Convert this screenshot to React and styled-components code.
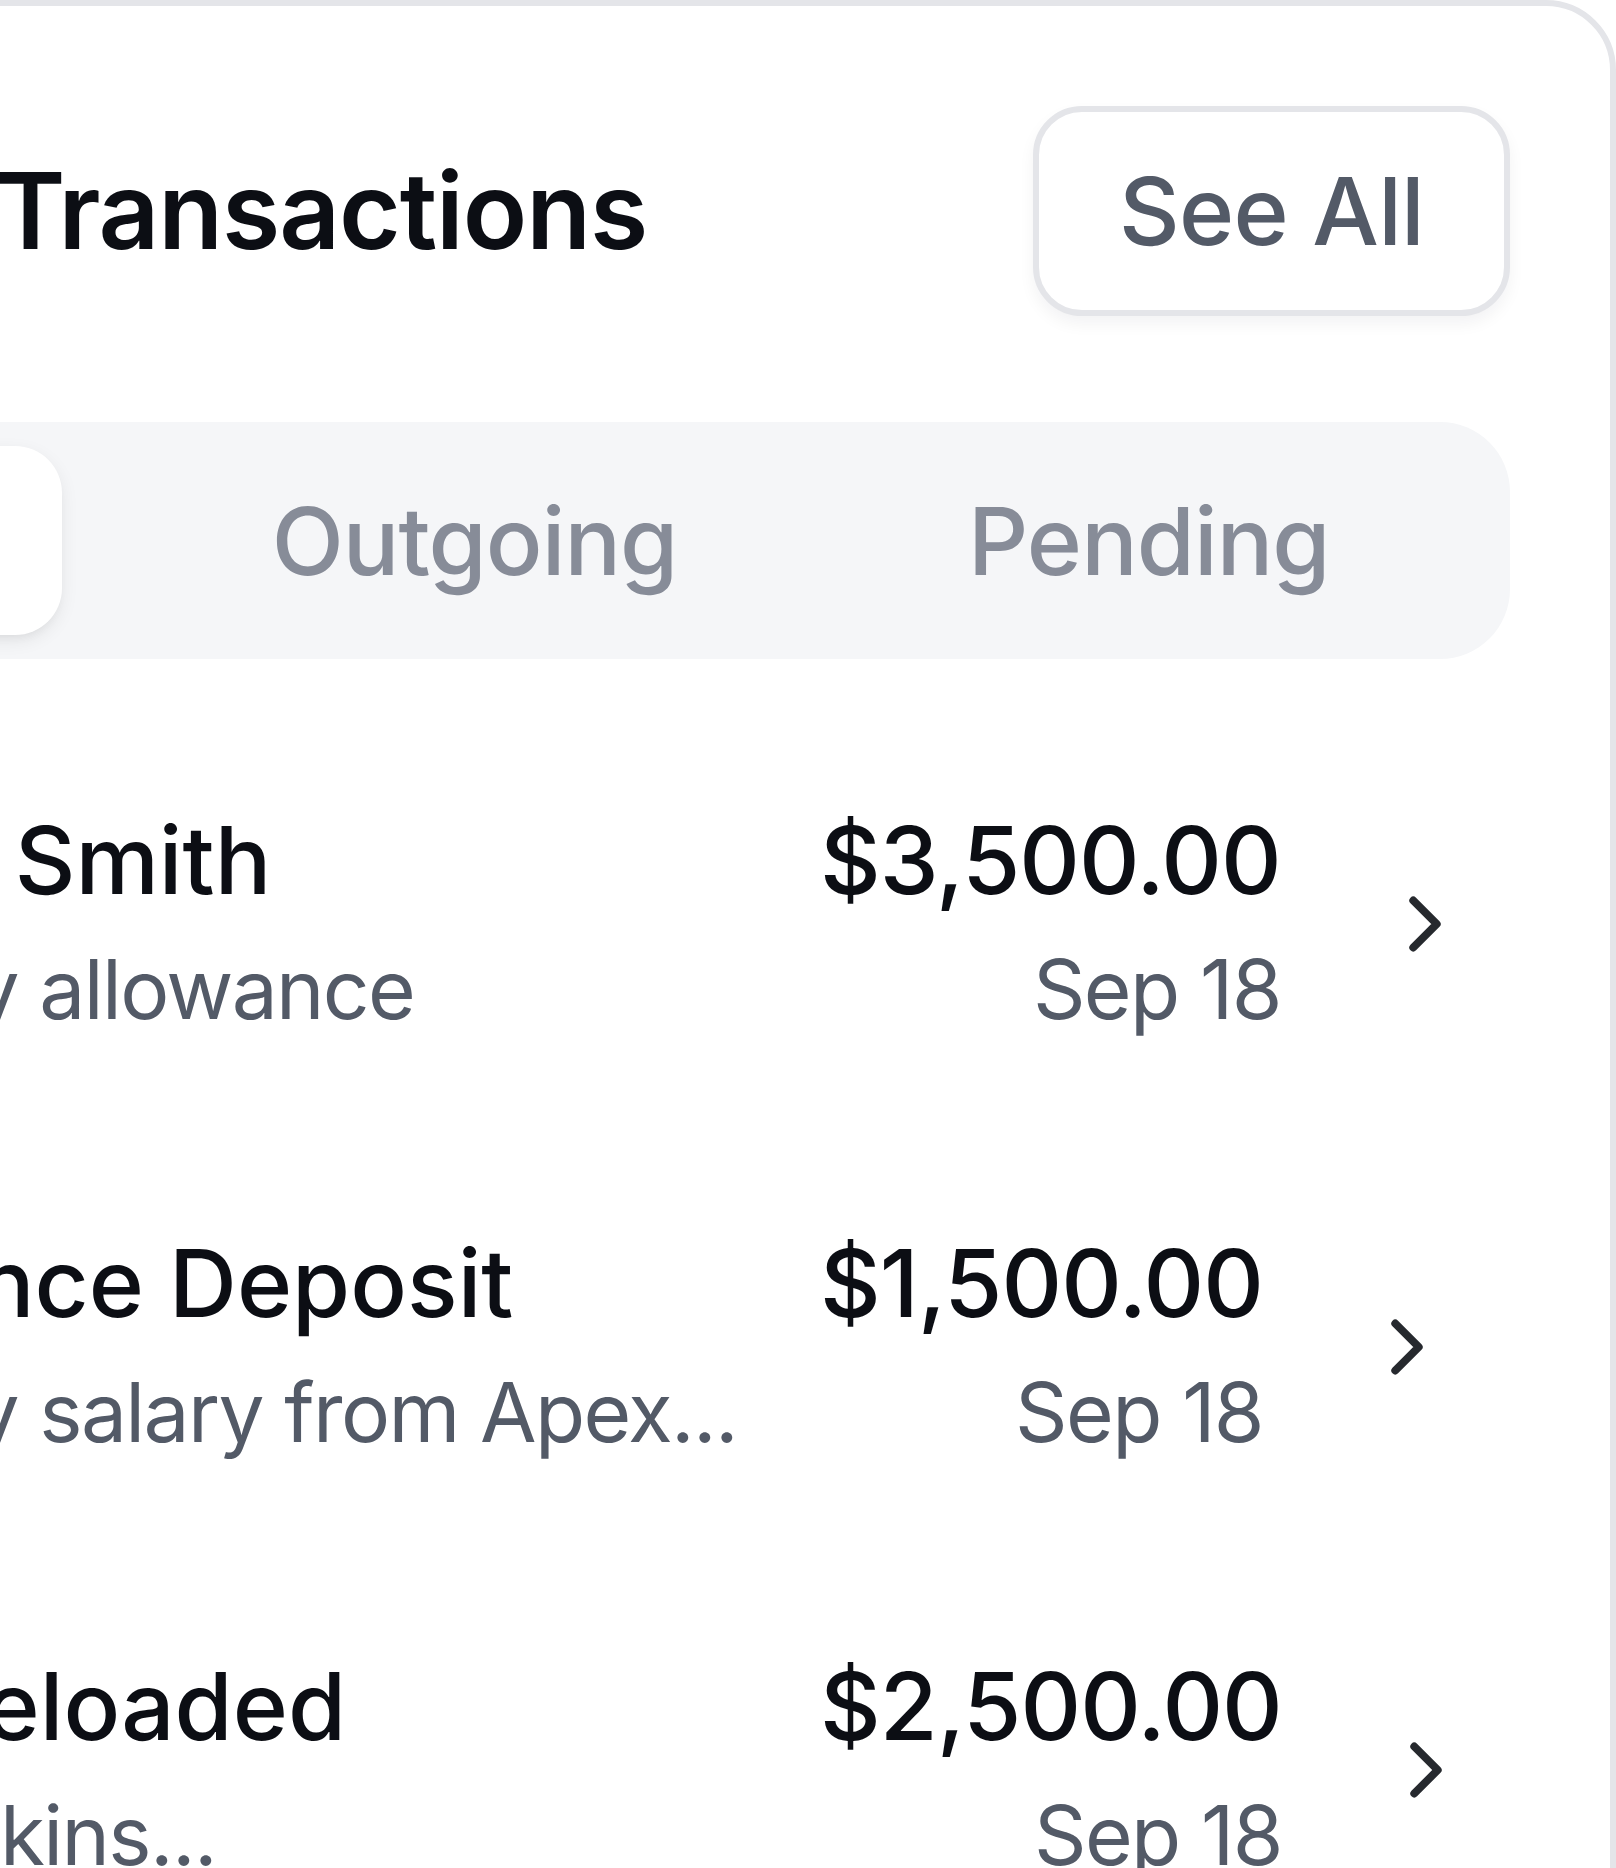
import React from "react";
import styled, { createGlobalStyle } from "styled-components";
import { ChevronRight, Receipt, ArrowDownLeft, Wallet } from "lucide-react";

const GlobalStyle = createGlobalStyle`
  html, body {
    margin: 0;
    padding: 0;
    background: #ffffff;
  }
  body {
    font-family: Inter, "Noto Sans", sans-serif;
    overflow: hidden;
  }
`;

const Page = styled.div`
  width: 1616px;
  height: 1868px;
  overflow: hidden;
`;

const Card = styled.section`
  box-sizing: border-box;
  width: 2283px;
  margin-left: -667px;
  padding: 100px 100px 120px;
  background: #ffffff;
  border: 6px solid #e4e5e9;
  border-radius: 70px;
`;

const Header = styled.div`
  display: flex;
  align-items: center;
  justify-content: space-between;
  height: 210px;
`;

const Title = styled.h2`
  margin: 0;
  display: flex;
  align-items: center;
  gap: 39px;
  font-size: 106px;
  line-height: 164px;
  font-weight: 600;
  letter-spacing: -0.01em;
  color: #0c0e14;
  white-space: nowrap;
`;

const SeeAll = styled.button`
  box-sizing: border-box;
  height: 210px;
  padding: 0 80px;
  border: 6px solid #e4e5e9;
  border-radius: 49px;
  background: #ffffff;
  box-shadow: 0 8px 16px rgba(16, 24, 40, 0.05);
  font-family: inherit;
  font-size: 94px;
  font-weight: 500;
  letter-spacing: -0.008em;
  color: #535a67;
  cursor: pointer;
`;

const TabBar = styled.div`
  box-sizing: border-box;
  margin-top: 106px;
  height: 237px;
  padding: 24px;
  display: grid;
  grid-template-columns: repeat(3, 1fr);
  background: #f5f6f8;
  border-radius: 70px;
`;

const Tab = styled.button`
  border: 0;
  border-radius: 47px;
  margin-right: ${(p) => (p.$active ? "75px" : "0")};
  background: ${(p) => (p.$active ? "#ffffff" : "transparent")};
  box-shadow: ${(p) =>
    p.$active
      ? "0 6px 18px rgba(0, 0, 0, 0.07), 0 6px 12px -6px rgba(0, 0, 0, 0.07)"
      : "none"};
  font-family: inherit;
  font-size: 94px;
  font-weight: 500;
  letter-spacing: -0.01em;
  color: ${(p) => (p.$active ? "#0c0e14" : "#878c98")};
  cursor: pointer;
`;

const List = styled.div`
  margin-top: 60px;
  display: flex;
  flex-direction: column;
  gap: 23.5px;
`;

const Row = styled.div`
  display: flex;
  align-items: center;
  padding: 70.5px 0;
`;

const Avatar = styled.div`
  flex-shrink: 0;
  width: 235px;
  height: 235px;
  margin-right: 42px;
  border-radius: 50%;
  display: flex;
  align-items: center;
  justify-content: center;
  background: ${(p) => p.$bg};
  color: ${(p) => p.$fg};
`;

const Info = styled.div`
  flex-shrink: 0;
  width: 1034px;
  margin-right: 70px;
  display: flex;
  flex-direction: column;
`;

const Name = styled.div`
  font-size: 94px;
  line-height: 141px;
  font-weight: 500;
  letter-spacing: ${(p) => (p.$tight ? "-0.01em" : "0")};
  color: #0c0e14;
  white-space: nowrap;
`;

const Note = styled.div`
  font-size: 82px;
  line-height: 117.5px;
  letter-spacing: -0.02em;
  color: #535a67;
  white-space: nowrap;
`;

const Money = styled.div`
  display: flex;
  flex-direction: column;
  align-items: flex-end;
`;

const Arrow = styled(ChevronRight)`
  flex-shrink: 0;
  margin-left: 97px;
  margin-top: 10px;
  color: #26292e;
`;

const rows = [
  {
    name: "Albert Smith",
    note: "Monthly allowance",
    amount: "$3,500.00",
    date: "Sep 18",
    icon: ArrowDownLeft,
    bg: "#ecfdf3",
    fg: "#16a34a",
  },
  {
    name: "Guidance Deposit",
    note: "Monthly salary from Apex...",
    amount: "$1,500.00",
    date: "Sep 18",
    icon: ArrowDownLeft,
    bg: "#eff6ff",
    fg: "#2563eb",
  },
  {
    name: "Taxi Reloaded",
    note: "via Hopkins...",
    amount: "$2,500.00",
    date: "Sep 18",
    icon: Wallet,
    bg: "#fef3c7",
    fg: "#d97706",
  },
];

export default function App() {
  return (
    <Page>
      <GlobalStyle />
      <Card>
        <Header>
          <Title>
            <Receipt size={141} strokeWidth={2} />
            Recent Transactions
          </Title>
          <SeeAll>See All</SeeAll>
        </Header>

        <TabBar>
          <Tab $active>Incoming</Tab>
          <Tab>Outgoing</Tab>
          <Tab>Pending</Tab>
        </TabBar>

        <List>
          {rows.map((item) => {
            const Icon = item.icon;
            return (
              <Row key={item.name}>
                <Avatar $bg={item.bg} $fg={item.fg}>
                  <Icon size={117} strokeWidth={2} />
                </Avatar>
                <Info>
                  <Name>{item.name}</Name>
                  <Note>{item.note}</Note>
                </Info>
                <Money>
                  <Name $tight>{item.amount}</Name>
                  <Note>{item.date}</Note>
                </Money>
                <Arrow size={94} strokeWidth={2} />
              </Row>
            );
          })}
        </List>
      </Card>
    </Page>
  );
}
